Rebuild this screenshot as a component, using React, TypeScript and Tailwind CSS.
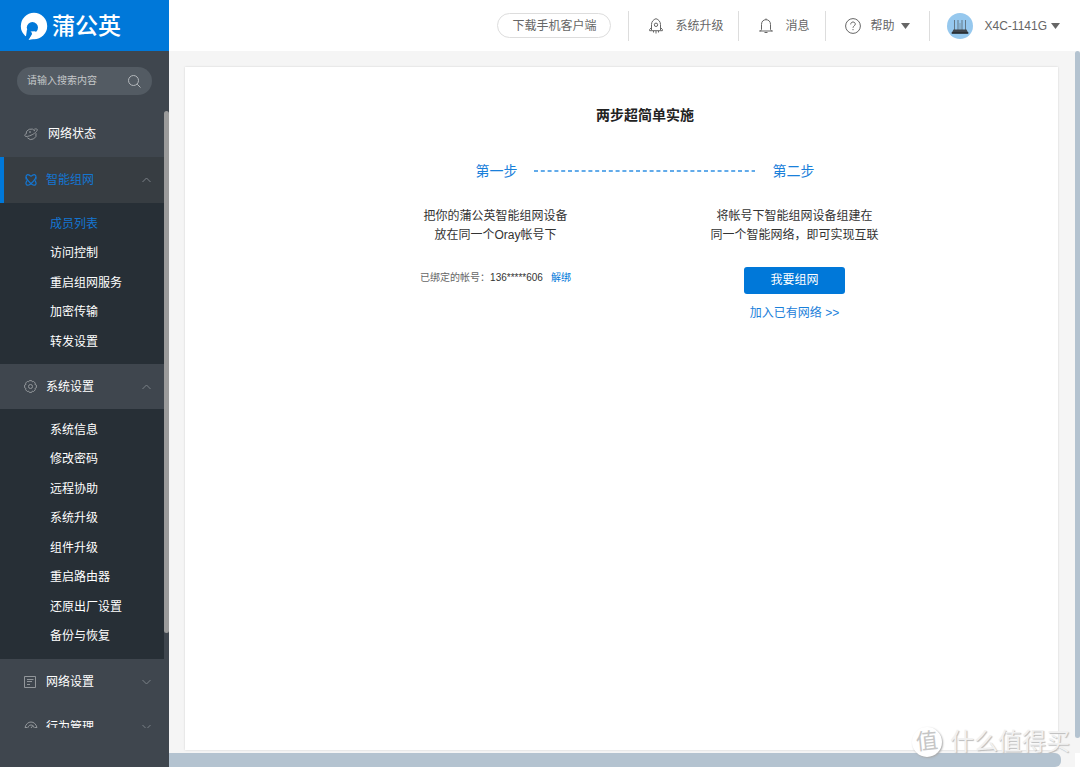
import { useState } from 'react'
import type { ReactNode } from 'react'

const NETWORK_ITEMS = ['成员列表', '访问控制', '重启组网服务', '加密传输', '转发设置'];
const SYSTEM_ITEMS = ['系统信息', '修改密码', '远程协助', '系统升级', '组件升级', '重启路由器', '还原出厂设置', '备份与恢复'];

const Planet = () => (
  <svg width="14" height="14" viewBox="0 0 14 14" fill="none" stroke="currentColor" strokeWidth="1">
    <path d="M2 7.300A5 5 0 0 1 11 4M12 6.200a5 5 0 0 1-8.600 4.600" />
    <path d="M10.300 2.200c1.500-.5 2.600-.4 2.900.2.600 1.200-1.700 3.500-5 5.300-3.300 1.700-6.700 2.400-7.300 1.200-.3-.5.100-1.300 1-2.200" />
    <circle cx="6" cy="5" r="0.500" />
  </svg>
);

const Mesh = () => (
  <svg width="12" height="12" viewBox="0 0 12 12" fill="none" stroke="currentColor" strokeWidth="1.200">
    <path d="M6 2.400C4.500 1 2.600.2 1.500 1.300.5 2.400 1.200 4.300 3.300 6.800 5.500 9.400 8.700 12.200 10.500 10.700c1-1 .5-2.700-.7-4.400" />
    <path d="M6 2.400C7.500 1 9.400.2 10.500 1.300c1 1.100.3 3-1.800 5.500C6.500 9.400 3.300 12.200 1.500 10.700c-1-1-.5-2.700.7-4.400" />
    <path d="M1.100 3v2.500M10.900 3v2.500" />
  </svg>
);

const Gear = () => (
  <svg width="13" height="13" viewBox="0 0 13 13" fill="none" stroke="currentColor" strokeWidth="1">
    <path d="M5.300.6h2.400l.6 1.200 1.300-.4 1.700 1.700-.4 1.300 1.500.7v2.600l-1.500.8.4 1.300-1.700 1.700-1.300-.4-.6 1.300H5.300l-.7-1.300-1.300.4-1.700-1.700.4-1.300-1.400-.8V5.100L2 4.400l-.4-1.300 1.700-1.700 1.300.4z" strokeLinejoin="round" />
    <circle cx="6.500" cy="6.500" r="2" />
  </svg>
);

const Doc = () => (
  <svg width="12" height="12" viewBox="0 0 12 12" fill="none" stroke="currentColor" strokeWidth="1">
    <path d="M.5.5h11v11H.5zM3 3.500h6.500M3 5.500h5M3 8.500h3" />
  </svg>
);

const Gauge = () => (
  <svg width="14" height="14" viewBox="0 0 14 14" fill="none" stroke="currentColor" strokeWidth="1">
    <path d="M1 7.500C2 4 4.200 2 7 2s5 2 6 5.500M3.500 8.500C4.200 6 5.300 5 7 5s2.800 1 3.500 3.500M1 7.500h2M11 7.500h2M7 8l2-2.500" />
  </svg>
);

const Rocket = () => (
  <svg width="14" height="16" viewBox="0 0 14 16" fill="none" stroke="currentColor" strokeWidth="1">
    <path d="M2.500 12V6.500C2.500 3.800 4.300 1.500 7 .7c2.700.8 4.500 3.100 4.500 5.800V12M2.500 9.500.6 11.500v1.200h12.800v-1.200l-1.900-2" />
    <circle cx="7" cy="6.800" r="1.700" />
    <path d="M4.500 13v1.500M7 13v2.500M9.500 13v1.500" />
  </svg>
);

const Bell = () => (
  <svg width="14" height="16" viewBox="0 0 14 16" fill="none" stroke="currentColor" strokeWidth="1">
    <path d="M2.500 11.500v-5C2.500 3.500 4.300 1.700 7 1.700s4.500 1.800 4.500 4.800v5M.5 13c1 0 2-.4 2-1.500M13.500 13c-1 0-2-.4-2-1.500M.5 13h13M7 .5v1.200M5.500 14.500h3" />
  </svg>
);

const Help = () => (
  <svg width="16" height="16" viewBox="0 0 16 16" fill="none" stroke="currentColor" strokeWidth="1">
    <circle cx="8" cy="8" r="7.400" />
    <path d="M5.700 6.400C5.700 5 6.600 4 8 4s2.300.9 2.300 2.100c0 1.700-2.300 1.800-2.300 3.700M8 11v1.200" />
  </svg>
);

const Caret = () => (
  <svg width="9" height="6" viewBox="0 0 9 6" fill="currentColor">
    <path d="M0 0h9L4.500 6z" />
  </svg>
);

const Router = () => (
  <svg width="26" height="26" viewBox="0 0 26 26">
    <circle cx="13" cy="13" r="13" fill="#96c8ee" />
    <path d="M7.500 7v11M11 7v11M15 7v11M18.500 7v11" stroke="#637887" />
    <path d="M13 10v8" stroke="#7e9caf" />
    <path d="M6.500 16.500h13l1.800 3.500H4.700z" fill="#3e444b" />
    <path d="M4.700 19.300h16.600v1.500H4.700z" fill="#23272b" />
  </svg>
);

const Chevron = ({ open }: { open: boolean }) => (
  <svg width="9" height="6" viewBox="0 0 9 6" fill="none" stroke="#7b8086" strokeWidth="1">
    <path d={open ? 'M.5 5 4.500 1l4 4' : 'M.5 1l4 4 4-4'} />
  </svg>
);

function MenuGroup({ icon, label, items = [], current, active = false, onPick }: {
  icon: ReactNode; label: string; items?: string[]; current: string; active?: boolean; onPick: (item: string) => void
}) {
  const [open, setOpen] = useState(items.length > 0);

  return (
    <li className="shrink-0">
      <button
        className={`flex w-full items-center pr-[13px] text-left cursor-pointer ${active ? 'h-[46px] border-l-4 border-[#0078d9] bg-[#373d42] pl-[21px] text-[#1476d2]' : 'h-[45px] pl-6 text-white'}`}
        onClick={() => setOpen(!open)}
      >
        <span className={`flex w-[22px] ${active ? '-mr-px' : 'text-[#92969a]'}`}>{icon}</span>
        <span className="flex-1">{label}</span>
        <Chevron open={open} />
      </button>
      {open && items.length > 0 && (
        <ul className="bg-[#272f36] pt-1.5 pb-2">
          {items.map((item) => (
            <li key={item} className="flex h-[29px] items-center even:h-[30px]">
              <a
                href="#"
                className={`pl-[50px] ${item === current ? 'text-[#1476d2]' : 'text-white'}`}
                onClick={() => onPick(item)}
              >
                {item}
              </a>
            </li>
          ))}
        </ul>
      )}
    </li>
  );
}

function Sidebar() {
  const [current, setCurrent] = useState('成员列表');

  return (
    <aside className="flex w-[169px] shrink-0 flex-col bg-[#3f464e]">
      <div className="flex h-[51px] shrink-0 items-center gap-1 bg-[#0078d9] pl-5 text-white">
        <svg width="28" height="28" viewBox="0 0 28 28">
          <circle cx="14" cy="14" r="13.200" fill="#fff" />
          <circle cx="12.400" cy="15.600" r="5.600" fill="#0078d9" />
          <path d="M7 17.500 5.500 27.500l3 .5 4.500-7z" fill="#0078d9" />
          <path d="M10.500 19.500c1.500.8 2 2.500 1 4L8.500 28l5-1 4.500-6.500-3.500-1.200z" fill="#fff" />
        </svg>
        <span className="text-[23px] leading-7 font-medium">蒲公英</span>
      </div>
      <label className="mx-[17px] my-4 flex h-7 shrink-0 items-center rounded-full bg-[#535b63] pr-[11px] pl-2.5">
        <input
          type="text"
          aria-label="搜索"
          placeholder="请输入搜索内容"
          className="w-full min-w-0 flex-1 text-[10px] text-white outline-none placeholder:text-[#c5c8ca]"
        />
        <svg width="13" height="13" viewBox="0 0 13 13" fill="none" stroke="#b4b8bc">
          <circle cx="5.500" cy="5.500" r="5" />
          <path d="m9.200 9.200 3.300 3.300" />
        </svg>
      </label>
      <div className="mb-[39px] flex min-h-0 flex-1">
        <ul className="flex min-w-0 flex-1 flex-col overflow-y-auto [scrollbar-width:none]">
          <li className="shrink-0">
            <a href="#" className="flex h-[46px] items-center pl-6 text-white">
              <span className="flex w-6 text-[#92969a]"><Planet /></span>
              网络状态
            </a>
          </li>
          <MenuGroup icon={<Mesh />} label="智能组网" items={NETWORK_ITEMS} current={current} active onPick={setCurrent} />
          <MenuGroup icon={<Gear />} label="系统设置" items={SYSTEM_ITEMS} current={current} onPick={setCurrent} />
          <MenuGroup icon={<Doc />} label="网络设置" current={current} onPick={setCurrent} />
          <MenuGroup icon={<Gauge />} label="行为管理" current={current} onPick={setCurrent} />
        </ul>
        <div className="w-[5px]">
          <div className="h-11/13 rounded-full bg-[#9b9b9b]" />
        </div>
      </div>
    </aside>
  );
}

function Header() {
  return (
    <header className="flex h-[51px] shrink-0 items-center justify-end bg-white pr-5 text-[#666]">
      <button className="mr-[17px] h-[25px] rounded-full border border-[#ddd] px-3.5 cursor-pointer">下载手机客户端</button>
      <a href="#" className="flex h-[30px] items-center gap-3 border-l border-[#ddd] pr-[15px] pl-5"><Rocket />系统升级</a>
      <a href="#" className="flex h-[30px] items-center gap-3 border-l border-[#ddd] pr-[15px] pl-5"><Bell />消息</a>
      <button className="flex h-[30px] items-center border-l border-[#ddd] px-[19px] cursor-pointer">
        <Help />
        <span className="mr-1.5 ml-2.5">帮助</span>
        <Caret />
      </button>
      <button className="flex h-[30px] items-center border-l border-[#ddd] pl-[17px] cursor-pointer">
        <Router />
        <span className="mr-1 ml-3">X4C-1141G</span>
        <Caret />
      </button>
    </header>
  );
}

function Steps() {
  return (
    <section className="flex-1 bg-white pt-[38px] pl-[47px] shadow-[0_0_2px_rgba(0,0,0,0.15)]">
      <h1 className="text-center text-sm leading-5 font-bold text-[#222]">两步超简单实施</h1>
      <div className="mt-9 flex items-center justify-center gap-4 text-sm leading-5 text-[#1a80da]">
        <h2>第一步</h2>
        <svg width="223" height="2" viewBox="0 0 223 2">
          <path d="M0 1h221" stroke="#2f90e4" strokeWidth="1.500" strokeDasharray="4 2.800" />
        </svg>
        <h2>第二步</h2>
      </div>
      <div className="mx-auto mt-[26px] grid max-w-[598px] grid-cols-2 text-center leading-[19px] text-[#333]">
        <div>
          <p>把你的蒲公英智能组网设备<br />放在同一个Oray帐号下</p>
          <p className="mt-[23px] text-[10px] text-[#666]">
            已绑定的帐号：<span className="text-[#333]">136*****606</span>
            <a href="#" className="ml-2 text-[#0078d9]">解绑</a>
          </p>
        </div>
        <div className="flex flex-col items-center">
          <p>将帐号下智能组网设备组建在<br />同一个智能网络，即可实现互联</p>
          <button className="mt-[22px] h-[27px] w-[101px] rounded-[3px] bg-[#0078d9] text-white cursor-pointer">我要组网</button>
          <a href="#" className="mt-2.5 text-[#1a80da]">加入已有网络 &gt;&gt;</a>
        </div>
      </div>
    </section>
  );
}

function Watermark() {
  return (
    <div className="pointer-events-none absolute right-2.5 bottom-2.5 flex items-center gap-2 text-[#f1f1f1] [text-shadow:1px_1px_1px_#bbb]">
      <span className="flex size-[30px] items-center justify-center rounded-full bg-white text-[22px] leading-none text-[#c6c6c6] shadow-[1px_1px_2px_#aaa] [text-shadow:none]">
        <span className="-rotate-6">值</span>
      </span>
      <span className="text-[24px] leading-[30px] whitespace-nowrap">什么值得买</span>
    </div>
  );
}

function App() {
  return (
    <div className="relative flex h-screen min-h-[400px] overflow-hidden bg-[#f5f5f5] font-['Liberation_Sans','Noto_Sans_CJK_SC',sans-serif] text-xs">
      <Sidebar />
      <div className="flex min-w-0 flex-1 flex-col">
        <Header />
        <div className="flex min-h-0 flex-1">
          <main className="flex min-w-0 flex-1 flex-col">
            <div className="flex flex-1 pt-4 pr-[17px] pb-[3px] pl-4">
              <Steps />
            </div>
            <div className="mr-3.5 h-3.5 rounded-r-md bg-[#b4c3d0]" />
          </main>
          <div className="flex w-[5px] flex-col justify-between">
            <div className="mb-[15px] flex-1 rounded-full bg-[#b4c3d0]" />
            <div className="h-3.5 bg-white" />
          </div>
        </div>
      </div>
      <Watermark />
    </div>
  );
}

export default App
